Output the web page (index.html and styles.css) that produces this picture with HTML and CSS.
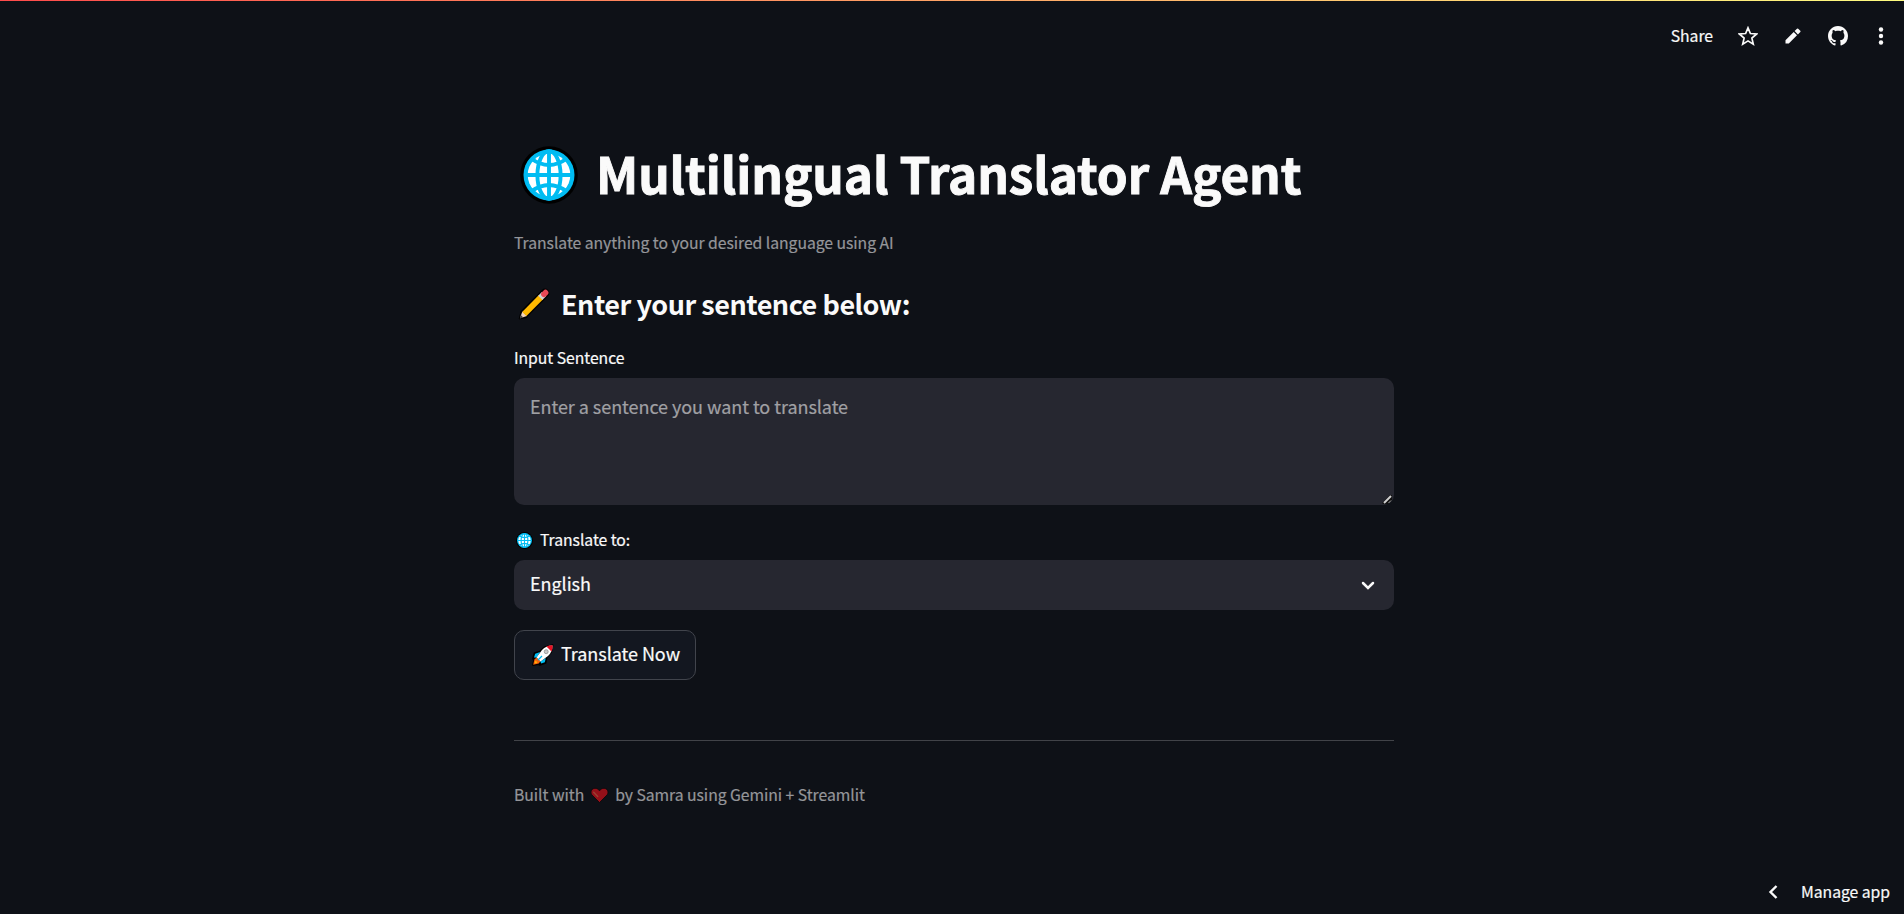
FILE: index.html
```html
<!DOCTYPE html>
<html lang="en">
<head>
<meta charset="utf-8">
<title>Multilingual Translator Agent</title>
<link rel="stylesheet" href="styles.css">
</head>
<body>
<svg class="defs" width="0" height="0">
  <symbol id="globe" viewBox="0 0 58 58">
    <circle cx="29" cy="29" r="28.8" fill="#000"/>
    <circle cx="29" cy="29" r="25.5" fill="#00bcf2"/>
    <circle cx="29" cy="29" r="21.3" fill="#fff"/>
    <g fill="none" stroke="#00bcf2" stroke-width="3.900">
      <path d="M29 5v48M5 29h48"/>
      <ellipse cx="29" cy="29" rx="11.600" ry="24"/>
      <path d="M11 12.500q18 13 36 0M11 45.500q18-13 36 0"/>
    </g>
  </symbol>
</svg>
<div class="app">
  <div class="rainbow"></div>
  <header class="toolbar">
    <span class="share">Share</span>
    <svg class="star" width="20" height="20" viewBox="0 0 20 20"><path d="M10 1.800l2.400 5.700 6.200.5-4.700 4.100 1.400 6.100-5.300-3.300-5.300 3.300 1.400-6.100L1.400 8l6.200-.5z" fill="none" stroke="#fafafa" stroke-width="1.700"/></svg>
    <svg class="edit" width="16" height="16" viewBox="0 0 16 16"><path d="M.5 12.200V15.500h3.300L12 7.300 8.700 4z M9.600 3.100l3.300 3.300 2.400-2.400q.6-.6 0-1.200L13.200.7q-.6-.6-1.200 0z" fill="#fafafa"/></svg>
    <svg class="github" width="20" height="20" viewBox="0 0 16 16"><path fill="#fafafa" d="M8 0C3.580 0 0 3.580 0 8c0 3.540 2.290 6.530 5.470 7.590.4.070.55-.17.55-.38 0-.19-.01-.82-.01-1.490-2.010.37-2.530-.49-2.690-.94-.09-.23-.48-.94-.82-1.130-.28-.15-.68-.52-.01-.53.63-.01 1.080.58 1.230.82.72 1.210 1.870.87 2.330.66.070-.52.28-.87.51-1.070-1.780-.2-3.640-.89-3.640-3.950 0-.87.31-1.590.82-2.150-.08-.2-.36-1.020.08-2.120 0 0 .67-.21 2.200.82.64-.18 1.320-.27 2-.27s1.360.09 2 .27c1.530-1.040 2.200-.82 2.200-.82.44 1.100.16 1.920.08 2.120.51.56.82 1.270.82 2.150 0 3.070-1.870 3.750-3.650 3.950.29.25.54.73.54 1.480 0 1.070-.01 1.930-.01 2.200 0 .21.15.46.55.38A8.010 8.010 0 0 0 16 8c0-4.420-3.580-8-8-8z"/></svg>
    <svg class="more" width="6" height="18" viewBox="0 0 6 18"><g fill="#fafafa"><circle cx="3" cy="2.500" r="2.200"/><circle cx="3" cy="9" r="2.200"/><circle cx="3" cy="15.500" r="2.200"/></g></svg>
  </header>

  <main class="content">
    <h1 class="title"><svg class="title-icon" width="58" height="58"><use href="#globe"/></svg><span>Multilingual Translator Agent</span></h1>
    <p class="caption">Translate anything to your desired language using AI</p>
    <h3 class="subtitle">
      <svg class="pencil" width="34" height="34" viewBox="0 0 34 34">
        <path d="M6.500 26.500L27 6" stroke="#000" stroke-width="8.800" stroke-linecap="round"/>
        <path d="M1.200 32L3 24.500l6 6z" fill="#000" stroke="#000" stroke-linejoin="round"/>
        <path d="M2 31.300L4.300 24.500l4.700 4.500z" fill="#f3d4bd"/>
        <path d="M1.800 31.500l1-3.400 2.500 2.300z" fill="#444"/>
        <path d="M6.300 27L23 10.200" stroke="#ffb900" stroke-width="6"/>
        <path d="M22.300 10.900L26 7.200" stroke="#d2d2d2" stroke-width="6"/>
        <path d="M26 7.200l1.500-1.500" stroke="#e74856" stroke-width="5.800" stroke-linecap="round"/>
      </svg>
      <span>Enter your sentence below:</span>
    </h3>
    <label class="label" for="sentence">Input Sentence</label>
    <div class="area" id="sentence">
      <span>Enter a sentence you want to translate</span>
      <svg class="grip" width="10" height="10" viewBox="0 0 10 10"><path d="M0 9L8 1h2v5L6 10H1z" fill="#111"/><path d="M2 9L9 2" stroke="#d0d0d0" stroke-width="2"/><path d="M6.500 9L9 6.500" stroke="#d0d0d0" stroke-width=".8"/></svg>
    </div>
    <div class="label label-lang"><svg width="17" height="17"><use href="#globe"/></svg><span>Translate to:</span></div>
    <div class="select">
      <span>English</span>
      <svg width="14" height="9" viewBox="0 0 14 9"><path d="M2 2l5 5 5-5" fill="none" stroke="#fafafa" stroke-width="2.500" stroke-linecap="round"/></svg>
    </div>
    <button class="button">
      <svg width="24" height="24" viewBox="0 0 24 24">
        <path d="M21.500 2L14 4 9 8.500 3.500 10 2 15.500l1 2L2 22l5-1 2 1 5.500-2 1-5.500L20 9.500z" fill="#000" stroke="#000" stroke-width="1.800" stroke-linejoin="round"/>
        <path d="M3 14.500l1.200-3.700 5-1.800-3.500 5.500zM14.800 15l-5.500 3.500 1 2 3.500-1.300z" fill="#00bcf2"/>
        <path d="M2.200 21.800l1.300-5.500 2-1.500 3.800 3.800-1.600 2z" fill="#f7630c"/>
        <path d="M3.500 20.500l1-3 2 2z" fill="#ffb900"/>
        <path d="M21.500 2.500Q15 2.500 11 7L5.500 14.500l4 4L17 13q4.500-4 4.500-10.500z" fill="#fff"/>
        <path d="M21.700 2.300Q18 2.200 15.500 3.500l5 5q1.300-2.500 1.200-6.200z" fill="#e81224"/>
        <circle cx="15.200" cy="8.700" r="2" fill="#ccc" stroke="#888" stroke-width=".7"/>
        <path d="M7 17l4-4" stroke="#00bcf2" stroke-width="1.300"/>
      </svg>
      <span>Translate Now</span>
    </button>
    <hr class="rule">
    <p class="footer">
      <span>Built with</span>
      <svg width="19" height="17" viewBox="0 0 19 17"><path d="M9.500 15.500L1.800 7.800C-.2 4.500 2 1.300 5 1.300c2 0 3.500 1 4.500 2.500 1-1.500 2.500-2.500 4.500-2.500 3 0 5.200 3.200 3.200 6.500z" fill="#951019" stroke="#08080a" stroke-width=".8"/><path d="M3.700 5.200l4 4.200" stroke="#993f32" stroke-width="1.500" stroke-linecap="round"/></svg>
      <span>by Samra using Gemini + Streamlit</span>
    </p>
  </main>

  <footer class="manage">
    <svg width="10" height="14" viewBox="0 0 10 14"><path d="M8.500 1L2.500 7l6 6" fill="none" stroke="#fafafa" stroke-width="2.400"/></svg>
    <span>Manage app</span>
  </footer>
</div>
</body>
</html>
```
FILE: styles.css
```css
* { box-sizing: border-box; }
body {
  margin: 0;
  background: #0e1117;
  color: #fafafa;
  font: 18px/26px "Noto Sans CJK JP", "Noto Sans CJK SC", sans-serif;
  letter-spacing: -0.05px;
  -webkit-text-stroke: 0.2px currentColor;
}
span { white-space: nowrap; }
svg { flex: none; }
.defs { display: block; }
.app { height: 914px; display: flex; flex-direction: column; overflow: hidden; }
.rainbow { height: 1px; background: linear-gradient(90deg, #ff4b4b, #fffd80); }
.toolbar {
  height: 70px;
  padding-right: 20px;
  display: flex;
  align-items: center;
  justify-content: flex-end;
}
.share { font-size: 15.75px; margin-right: 25px; }
.star { margin: 0 27px 1px 0; }
.edit { margin-right: 27px; }
.github { margin: 0 30px 1px 0; }

.content { width: 880px; margin-left: 514px; display: flex; flex-direction: column; }
.title {
  margin: 66px 0 0;
  height: 72px;
  padding-left: 6px;
  display: flex;
  align-items: center;
  gap: 18px;
  font-size: 49.5px;
  line-height: 72px;
  font-weight: 700;
  letter-spacing: -0.09px;
  -webkit-text-stroke-width: 0.9px;
}
.title-icon { margin-top: 3px; }
.caption { margin: 21px 0 0; font-size: 15.75px; color: #95969a; }
.subtitle {
  margin: 28px 0 0;
  height: 40px;
  padding-left: 4px;
  display: flex;
  align-items: center;
  gap: 9px;
  font-size: 27px;
  line-height: 40px;
  font-weight: 600;
  letter-spacing: -0.48px;
  -webkit-text-stroke-width: 0;
}
.label { margin-top: 21px; font-size: 15.75px; }
.area {
  margin-top: 7px;
  height: 127px;
  padding: 15px 2px 1px 16px;
  display: flex;
  justify-content: space-between;
  border-radius: 10px;
  background: #262730;
  color: #a0a0a4;
}
.grip { align-self: flex-end; }
.label-lang { margin-top: 22px; display: flex; align-items: center; gap: 7px; padding-left: 2px; }
.select {
  margin-top: 7px;
  height: 50px;
  padding: 0 19px 4px 16px;
  display: flex;
  align-items: center;
  justify-content: space-between;
  border-radius: 10px;
  background: #262730;
}
.select svg { margin-top: 4px; }
.button {
  margin: 20px 0 0;
  width: 182px;
  height: 50px;
  padding: 0 0 4px 16px;
  display: flex;
  align-items: center;
  gap: 6px;
  border: 1px solid #41444c;
  border-radius: 10px;
  background: #131720;
  color: inherit;
  font: inherit;
  letter-spacing: inherit;
}
.button svg { margin-top: 3px; }
.rule { width: 100%; height: 1px; margin: 60px 0 0; border: 0; background: #414348; }
.footer {
  margin: 41px 0 0;
  display: flex;
  align-items: center;
  gap: 6px;
  font-size: 15.75px;
  color: #95969a;
}
.manage {
  margin: auto 14px 9px 0;
  display: flex;
  align-items: center;
  justify-content: flex-end;
  gap: 23px;
  font-size: 15.75px;
}
```
